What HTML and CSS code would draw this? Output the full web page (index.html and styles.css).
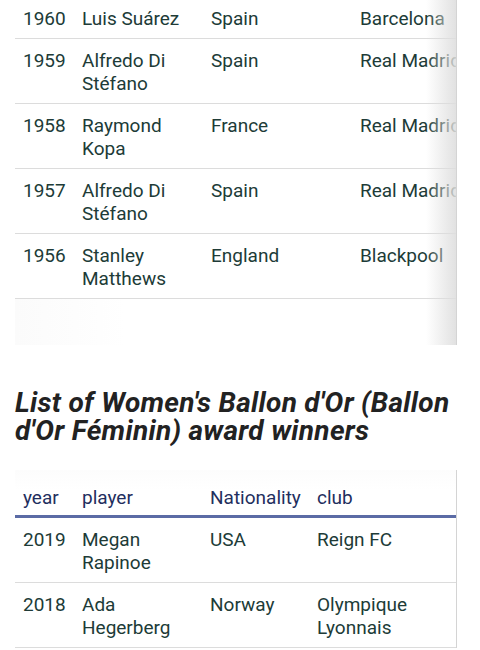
FILE: index.html
```html
<!DOCTYPE html>
<html>
<head>
<meta charset="utf-8">
<link rel="stylesheet" href="styles.css">
</head>
<body>
<div class="page">
  <div class="table-wrap first">
    <div class="table men">
      <div class="row"><div class="c">1960</div><div class="c">Luis Suárez</div><div class="c">Spain</div><div class="c">Barcelona</div></div>
      <div class="row"><div class="c">1959</div><div class="c">Alfredo Di Stéfano</div><div class="c">Spain</div><div class="c">Real Madrid</div></div>
      <div class="row"><div class="c">1958</div><div class="c">Raymond Kopa</div><div class="c">France</div><div class="c">Real Madrid</div></div>
      <div class="row"><div class="c">1957</div><div class="c">Alfredo Di Stéfano</div><div class="c">Spain</div><div class="c">Real Madrid</div></div>
      <div class="row"><div class="c">1956</div><div class="c">Stanley Matthews</div><div class="c">England</div><div class="c">Blackpool</div></div>
    </div>
    <div class="scroll-space"></div>
    <div class="shade"></div>
  </div>

  <h2 class="title">List of Women's Ballon d'Or (Ballon d'Or Féminin) award winners</h2>

  <div class="table-wrap second">
    <div class="table women">
      <div class="row head"><div class="c">year</div><div class="c">player</div><div class="c">Nationality</div><div class="c">club</div></div>
      <div class="row"><div class="c">2019</div><div class="c">Megan Rapinoe</div><div class="c">USA</div><div class="c">Reign FC</div></div>
      <div class="row"><div class="c">2018</div><div class="c">Ada Hegerberg</div><div class="c">Norway</div><div class="c">Olympique Lyonnais</div></div>
    </div>
  </div>
</div>
</body>
</html>
```

FILE: styles.css
```css
html, body {
  margin: 0;
  padding: 0;
  background: #ffffff;
}

body {
  font-family: Roboto, "Noto Sans", "Liberation Sans", sans-serif;
  color: #203b37;
  width: 480px;
  height: 650px;
  overflow: hidden;
}

.page {
  padding-left: 15px;
  width: 442px;
}

.table-wrap {
  position: relative;
  overflow: hidden;
  border-right: 1px solid #d4d4d4;
}

.table-wrap.first {
  margin-top: -3px;
}

.table {
  font-size: 19px;
  line-height: 23px;
}

.row {
  display: grid;
  border-bottom: 1px solid #dcdcdc;
  padding: 10px 0 8px 0;
}

.men .row {
  grid-template-columns: 59px 129px 149px 150px;
}

.women .row {
  grid-template-columns: 59px 128px 107px 148px;
}

.c {
  padding-left: 8px;
  padding-right: 8px;
}

.men .c:nth-child(3),
.men .c:nth-child(4) {
  white-space: nowrap;
}

.scroll-space {
  height: 46px;
  background: linear-gradient(to right, #fbfbfb 0px, #fdfdfd 60px, #ffffff 110px);
}

.shade {
  position: absolute;
  top: 0;
  right: 0;
  bottom: 0;
  width: 30px;
  background: linear-gradient(to right, rgba(255,255,255,0) 0%, rgba(222,222,222,0.9) 100%);
  pointer-events: none;
}

.title {
  margin: 44px 0 25px 0;
  font-size: 28px;
  line-height: 28px;
  font-weight: 700;
  font-style: italic;
  letter-spacing: 0.3px;
  color: #222222;
}

.table-wrap.second {
  padding-top: 6px;
  background: linear-gradient(to bottom, #fcfcfc 0px, #ffffff 20px);
}

.row.head {
  color: #1f2f5e;
  padding-bottom: 6px;
  border-bottom: 3px solid #5b6ba5;
}
```
